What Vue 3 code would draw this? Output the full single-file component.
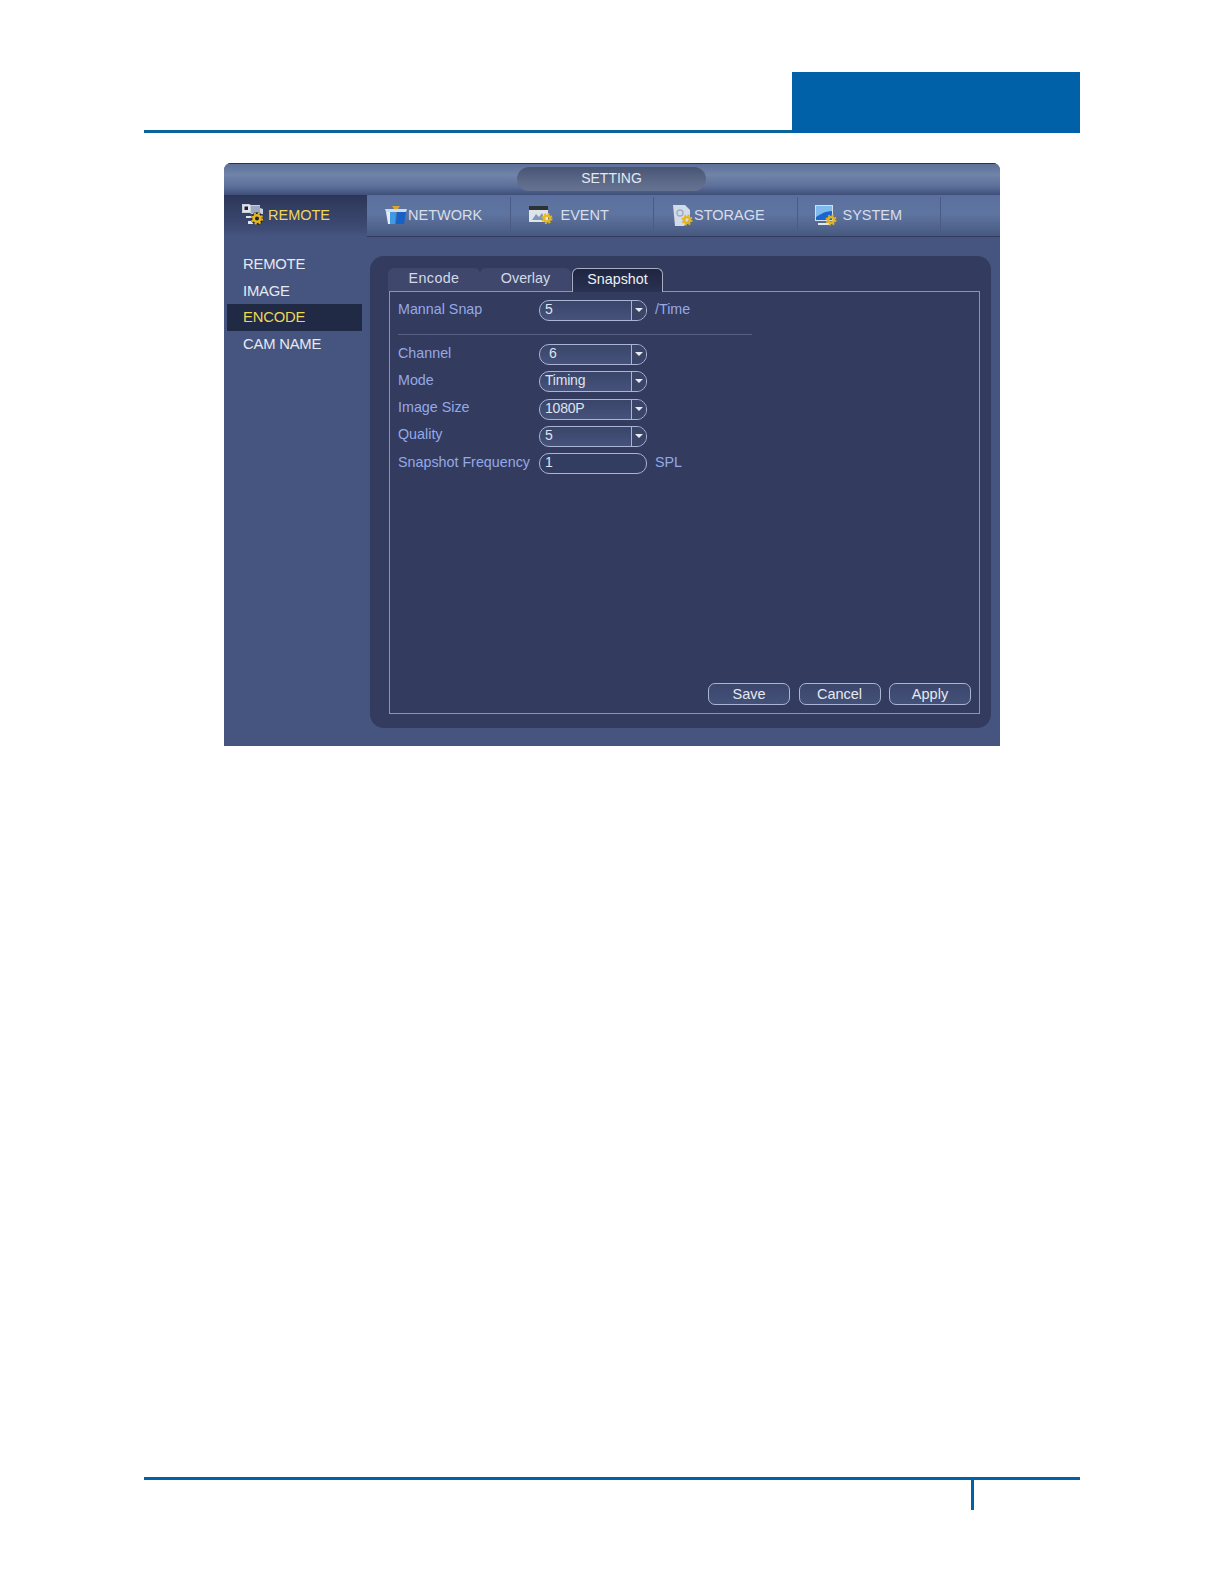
<script setup>
const navItems = [
  { id: 'network', label: 'NETWORK' },
  { id: 'event', label: 'EVENT' },
  { id: 'storage', label: 'STORAGE' },
  { id: 'system', label: 'SYSTEM' },
]
const sideItems = ['REMOTE', 'IMAGE', 'ENCODE', 'CAM NAME']
const rows = [
  { label: 'Channel', value: '6', indent: true, select: true },
  { label: 'Mode', value: 'Timing', select: true },
  { label: 'Image Size', value: '1080P', select: true },
  { label: 'Quality', value: '5', select: true },
  { label: 'Snapshot Frequency', value: '1', select: false, unit: 'SPL' },
]
</script>

<template>
  <div class="page">
    <header class="head">
      <div class="head-line"></div>
      <div class="head-block"></div>
    </header>

    <section class="screen">
      <div class="title-bar">
        <div class="title-pill">SETTING</div>
      </div>

      <div class="nav">
        <div class="nav-active">
          <svg class="ico" viewBox="0 0 22 21" width="22" height="21">
            <path d="M0 0h7l2 1h9v3l3 1v5l-10 1-3-2H0z" fill="#c9cfdb" />
            <rect x="1" y="1" width="7" height="7" fill="#dfe3ea" />
            <rect x="2.5" y="2.5" width="3.5" height="3.5" fill="#1b2130" />
            <path d="M9 2h9v7H9z" fill="#9da7bd" />
            <path d="M4 12h5v2H4zM6 17h6v3H6z" fill="#dfe3ee" />
            <circle cx="15" cy="14.5" r="6.3" fill="#1d2438" />
            <circle cx="15" cy="14.5" r="3.3" fill="none" stroke="#e7b81e" stroke-width="2.6" />
            <circle cx="15" cy="14.5" r="5.2" fill="none" stroke="#e7b81e" stroke-width="1.8" stroke-dasharray="2.2 1.9" />
          </svg>
          <span>REMOTE</span>
        </div>
        <div class="nav-rest">
          <div v-for="item in navItems" :key="item.id" class="nav-item" :class="item.id">
            <svg v-if="item.id === 'network'" class="ico" viewBox="0 0 24 18" width="24" height="18">
              <path d="M1 3h22l-1 3H2z" fill="#cfdcec" />
              <path d="M8 0h8l-2 3h-4z" fill="#d8a62a" />
              <path d="M2 6h4v12H4z" fill="#e3edf8" />
              <path d="M6 6h6l-1 12H6z" fill="#3f9ae6" />
              <path d="M13 6h9l-2 12h-8z" fill="#1661c6" />
            </svg>
            <svg v-else-if="item.id === 'event'" class="ico" viewBox="0 0 24 18" width="24" height="18">
              <rect x="0" y="0" width="19" height="16" fill="#dfe4e8" />
              <rect x="0" y="0" width="19" height="4" fill="#2b3135" />
              <path d="M3 14l4-6 3 3 3-4 3 7z" fill="#7f97b8" />
              <circle cx="18" cy="12.5" r="2.9" fill="none" stroke="#e8b91f" stroke-width="2.4" />
              <circle cx="18" cy="12.5" r="4.7" fill="none" stroke="#e8b91f" stroke-width="1.6" stroke-dasharray="1.9 1.8" />
            </svg>
            <svg v-else-if="item.id === 'storage'" class="ico" viewBox="0 0 21 21" width="21" height="21">
              <path d="M0 0h12l5 5v9l-6 7H2z" fill="#d3dbe8" />
              <circle cx="7" cy="8" r="3" fill="none" stroke="#9fadc4" stroke-width="1.4" />
              <circle cx="14" cy="15" r="2.9" fill="none" stroke="#e6b51d" stroke-width="2.4" />
              <circle cx="14" cy="15" r="4.7" fill="none" stroke="#e6b51d" stroke-width="1.6" stroke-dasharray="1.9 1.8" />
            </svg>
            <svg v-else class="ico" viewBox="0 0 22 21" width="22" height="21">
              <rect x="0" y="0" width="18" height="16" fill="#d5deea" />
              <path d="M1 1h16v14H1z" fill="#1a66cc" />
              <path d="M1 1h16v5C11 6 7 8 1 12z" fill="#7fb9ee" />
              <path d="M3 18h11v2H3z" fill="#dfe6ef" />
              <circle cx="16" cy="15" r="2.9" fill="none" stroke="#e6b51d" stroke-width="2.4" />
              <circle cx="16" cy="15" r="4.7" fill="none" stroke="#e6b51d" stroke-width="1.6" stroke-dasharray="1.9 1.8" />
            </svg>
            <span>{{ item.label }}</span>
          </div>
        </div>
      </div>

      <div class="main">
        <aside class="side">
          <div v-for="s in sideItems" :key="s" class="side-item" :class="{ on: s === 'ENCODE' }">{{ s }}</div>
        </aside>

        <div class="panel">
          <div class="tabs">
            <div class="tab t1">Encode</div>
            <div class="tab t2">Overlay</div>
            <div class="tab t3">Snapshot</div>
          </div>
          <div class="box">
            <div class="row">
              <div class="lab">Mannal Snap</div>
              <div class="sel">
                <span class="val">5</span>
                <span class="arrow"><i></i></span>
              </div>
              <div class="unit">/Time</div>
            </div>
            <div class="rule"></div>
            <div class="rows">
              <div v-for="r in rows" :key="r.label" class="row">
                <div class="lab">{{ r.label }}</div>
                <div class="sel" :class="{ plain: !r.select }">
                  <span class="val" :class="{ ind: r.indent }">{{ r.value }}</span>
                  <span v-if="r.select" class="arrow"><i></i></span>
                </div>
                <div v-if="r.unit" class="unit">{{ r.unit }}</div>
              </div>
            </div>
            <div class="actions">
              <button class="btn">Save</button>
              <button class="btn">Cancel</button>
              <button class="btn">Apply</button>
            </div>
          </div>
        </div>
      </div>
    </section>

    <footer class="foot">
      <div class="foot-line"></div>
      <div class="foot-tick"></div>
    </footer>
  </div>
</template>

<style>
html, body { margin: 0; background: #fff; }
</style>

<style scoped>
.page {
  width: 1224px;
  height: 1584px;
  box-sizing: border-box;
  padding-top: 72px;
  background: #fff;
  font-family: "Liberation Sans", Arial, sans-serif;
  display: flex;
  flex-direction: column;
}
.head {
  margin-left: 144px;
  width: 936px;
  height: 61px;
  display: flex;
  align-items: flex-end;
}
.head-line { width: 648px; height: 3px; background: #0b639b; }
.head-block { width: 288px; height: 61px; background: #0061a9; }

.screen {
  margin: 30px 0 0 224px;
  width: 776px;
  height: 583px;
  background: #46557f;
  border-radius: 7px 7px 0 0;
  display: flex;
  flex-direction: column;
  overflow: hidden;
}
.title-bar {
  height: 32px;
  flex: none;
  box-sizing: border-box;
  border-top: 1px solid #2a3350;
  background: linear-gradient(#5c7099, #7084a9 35%, #5b6f99 72%, #3f4f7a);
  display: flex;
  justify-content: center;
  padding-top: 3px;
}
.title-pill {
  width: 189px;
  height: 24px;
  border-radius: 12px;
  margin-right: 1px;
  background: linear-gradient(#485473, #5d6988 60%, #667291);
  color: #e4e8f0;
  font-size: 14px;
  line-height: 23px;
  text-align: center;
}

.nav { height: 42px; flex: none; display: flex; }
.nav-active {
  width: 143px;
  flex: none;
  box-sizing: border-box;
  background: linear-gradient(#2c3658, #3b4870 70%, #46557f);
  display: flex;
  align-items: center;
  padding: 0 0 3px 18px;
  color: #eed75a;
  font-size: 14.5px;
}
.nav-active span { margin-left: 4px; }
.nav-rest {
  flex: 1;
  display: flex;
  box-sizing: border-box;
  border-bottom: 1px solid #2f3a5c;
  background: linear-gradient(#5a6f9d, #5f75a1 45%, #47597f);
}
.nav-item {
  height: 36px;
  margin-top: 2px;
  box-sizing: border-box;
  display: flex;
  align-items: center;
  color: #d7deea;
  font-size: 14.5px;
  border-right: 1px solid #4a5b84;
  width: 143.5px;
  padding-left: 17px;
}
.nav-item.event { padding-left: 18px; }
.nav-item.event span { margin-left: 8px; }
.nav-item.storage { padding-left: 19px; }
.nav-item.system { padding-left: 17px; }
.nav-item.system span { margin-left: 6px; }
.ico { flex: none; display: block; }

.main { flex: 1; display: flex; min-height: 0; padding-top: 14px; }
.side { width: 146px; flex: none; box-sizing: border-box; padding-left: 3px; }
.side-item {
  width: 135px;
  height: 26.6px;
  box-sizing: border-box;
  padding-left: 16px;
  color: #e6e9f0;
  font-size: 14.8px;
  line-height: 26px;
  letter-spacing: -0.2px;
}
.side-item.on { background: #202a44; color: #eed75a; }

.panel {
  width: 621px;
  height: 472px;
  margin-top: 5px;
  box-sizing: border-box;
  border-radius: 14px;
  background: #333b5f;
  padding: 12px 11px 14px 18px;
  display: flex;
  flex-direction: column;
}
.tabs { display: flex; height: 23px; flex: none; }
.tab {
  box-sizing: border-box;
  height: 23px;
  border-radius: 6px 6px 0 0;
  text-align: center;
  font-size: 14.3px;
  line-height: 21px;
  color: #d5d9e6;
  background: #3f486c;
}
.t1 { width: 92px; letter-spacing: 0.4px; }
.t2 { width: 91px; }
.t3 {
  width: 91px;
  margin-left: 1px;
  background: linear-gradient(#1d2540, #2a3252);
  color: #eef0f5;
  border: 1px solid #a7aec4;
  border-bottom: 0;
  height: 24px;
  position: relative;
  z-index: 1;
}
.box {
  flex: 1;
  margin-left: 1px;
  box-sizing: border-box;
  border: 1px solid #8f93ab;
  padding: 8px;
  display: flex;
  flex-direction: column;
}
.row { display: flex; align-items: center; height: 21px; }
.lab {
  width: 141px;
  flex: none;
  color: #95a9e6;
  font-size: 14.3px;
  line-height: 21px;
  margin-top: -3px;
  white-space: nowrap;
}
.sel {
  width: 108px;
  height: 21px;
  flex: none;
  box-sizing: border-box;
  border: 1.5px solid #aab4d4;
  border-radius: 10px;
  background: linear-gradient(#3a456b, #46527a);
  display: flex;
  overflow: hidden;
}
.val {
  flex: 1;
  padding-left: 5px;
  color: #dfe3ee;
  font-size: 14px;
  line-height: 17px;
  letter-spacing: -0.2px;
}
.val.ind { padding-left: 9px; }
.arrow {
  width: 15px;
  flex: none;
  border-left: 1.5px solid #aab4d4;
  background: #3a4568;
  display: flex;
  align-items: center;
  justify-content: center;
  box-sizing: border-box;
}
.arrow i {
  display: block;
  width: 0;
  height: 0;
  border: 4px solid transparent;
  border-top: 4px solid #e8ebf2;
  border-bottom: 0;
  margin-top: -1px;
}
.sel.plain { background: #333d62; }
.unit {
  margin-left: 8px;
  color: #95a9e6;
  font-size: 14.3px;
  margin-top: -3px;
}
.rule { width: 354px; height: 1px; background: #586085; margin: 13px 0 9px; flex: none; }
.rows { display: flex; flex-direction: column; gap: 6.3px; }

.actions {
  margin-top: auto;
  display: flex;
  justify-content: flex-end;
  gap: 8.5px;
}
.btn {
  width: 82px;
  height: 22px;
  box-sizing: border-box;
  padding: 0;
  border: 1.5px solid #aab4d4;
  border-radius: 7px;
  background: linear-gradient(#3a466c, #445178);
  color: #e6e9f0;
  font-family: inherit;
  font-size: 14.5px;
  line-height: 18px;
}

.foot { margin: 731px 0 0 144px; width: 936px; }
.foot-line { height: 3px; background: #0061a3; }
.foot-tick { width: 3px; height: 30px; margin-left: 827px; background: #0061a3; }
</style>
